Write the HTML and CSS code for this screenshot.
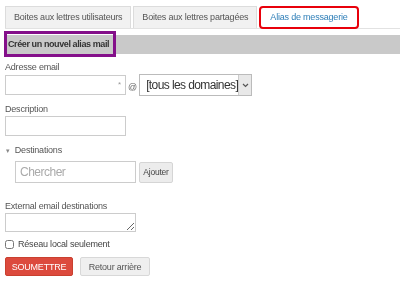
FILE: index.html
```html
<!DOCTYPE html>
<html lang="fr">
<head>
    <meta charset="UTF-8">
    <title>Alias de messagerie</title>
    <link rel="stylesheet" href="styles.css">
</head>
<body>
    <div class="page">
        <ul class="tabs">
            <li class="tab">Boites aux lettres utilisateurs</li>
            <li class="tab">Boites aux lettres partagées</li>
            <li class="tab active">Alias de messagerie</li>
        </ul>
        <div class="section-bar">
            <span class="section-title">Créer un nouvel alias mail</span>
        </div>

        <form class="form">
            <div class="field-email">
                <label>Adresse email</label>
                <div class="email-row">
                    <div class="email-box">
                        <input type="text" class="text-input">
                        <span class="required">*</span>
                    </div>
                    <span class="at">@</span>
                    <div class="domain-select">
                        <span class="domain-value">[tous les domaines]</span>
                        <span class="domain-arrow">
                            <svg width="7" height="5" viewBox="0 0 7 5"><path d="M1 1 L3.5 3.5 L6 1" fill="none" stroke="#555" stroke-width="1.2"/></svg>
                        </span>
                    </div>
                </div>
            </div>

            <div class="field-desc">
                <label>Description</label>
                <input type="text" class="text-input">
            </div>

            <div class="field-dest">
                <div class="toggle"><span class="caret">&#9662;</span>Destinations</div>
                <div class="search-row">
                    <input type="text" class="search-input" placeholder="Chercher">
                    <button type="button" class="btn-small">Ajouter</button>
                </div>
            </div>

            <div class="field-ext">
                <label>External email destinations</label>
                <textarea class="ext-area"></textarea>
            </div>

            <label class="check-row"><input type="checkbox" class="check"> Réseau local seulement</label>

            <div class="actions">
                <button type="button" class="btn-submit">SOUMETTRE</button>
                <button type="button" class="btn-back">Retour arrière</button>
            </div>
        </form>
    </div>
</body>
</html>
```

FILE: styles.css
```css
body {
    margin: 0;
    font-family: "Liberation Sans", Arial, sans-serif;
    color: #444;
    background: #fff;
}
.page {
    padding: 6px 0 0 5px;
}
.tabs {
    list-style: none;
    margin: 0;
    padding: 0;
    display: flex;
    gap: 2px;
    border-bottom: 1px solid #e2e2e2;
    height: 22px;
}
.tab {
    box-sizing: border-box;
    flex-shrink: 0;
    white-space: nowrap;
    height: 22px;
    padding: 0 8px;
    line-height: 21px;
    font-size: 9px;
    letter-spacing: -0.2px;
    color: #555;
    background: #f1f1f1;
    border: 1px solid #dcdcdc;
    border-bottom: none;
}
.tab.active {
    height: 23px;
    background: #fff;
    color: #2f7fb8;
    border: 2px solid #e8000b;
    border-radius: 4px;
    line-height: 19px;
    padding: 0 9px;
}
.section-bar {
    margin-top: 6px;
    height: 19px;
    background: #c9c9c9;
    display: flex;
    align-items: center;
}
.section-title {
    position: relative;
    font-size: 9px;
    letter-spacing: -0.4px;
    font-weight: bold;
    color: #333;
    padding: 0 4px 0 3px;
    line-height: 19px;
}
.section-title::after {
    content: "";
    position: absolute;
    left: -1px;
    right: -3px;
    top: -4px;
    bottom: -3px;
    border: 3px solid #84108a;
}
.form {
    margin-top: 8px;
}
label {
    display: block;
    font-size: 9px;
    letter-spacing: -0.2px;
    line-height: 10px;
    color: #555;
    margin-bottom: 2px;
}
.field-email {
    margin-bottom: 8px;
}
.field-desc {
    margin-bottom: 9px;
}
.field-dest {
    margin-bottom: 18px;
}
.field-ext {
    margin-bottom: 7px;
}
.text-input {
    box-sizing: border-box;
    width: 121px;
    height: 20px;
    border: 1px solid #ccc;
    margin: 0;
    padding: 2px 4px;
    display: block;
}
.email-row {
    display: flex;
    align-items: center;
}
.email-box {
    position: relative;
}
.required {
    position: absolute;
    right: 5px;
    top: 5px;
    font-size: 8px;
    color: #999;
}
.at {
    font-size: 9px;
    color: #666;
    margin: 3px 2px 0 2px;
}
.domain-select {
    box-sizing: border-box;
    display: flex;
    align-items: center;
    justify-content: space-between;
    width: 113px;
    height: 22px;
    border: 1px solid #bbb;
    background: #fff;
}
.domain-value {
    font-size: 12px;
    letter-spacing: -0.6px;
    color: #333;
    padding-left: 6px;
    white-space: nowrap;
}
.domain-arrow {
    box-sizing: border-box;
    width: 13px;
    height: 20px;
    background: #e8e8e8;
    border-left: 1px solid #ccc;
    display: flex;
    align-items: center;
    justify-content: center;
}
.toggle {
    font-size: 9px;
    letter-spacing: -0.2px;
    line-height: 10px;
    color: #555;
    margin-bottom: 5px;
}
.caret {
    font-size: 7px;
    color: #888;
    margin: 0 5px 0 1px;
}
.search-row {
    display: flex;
    align-items: center;
    padding-left: 10px;
    gap: 3px;
}
.search-input {
    box-sizing: border-box;
    width: 121px;
    height: 22px;
    border: 1px solid #ccc;
    margin: 0;
    padding: 2px 4px;
    font-family: "Liberation Sans", Arial, sans-serif;
    font-size: 12px;
    letter-spacing: -0.5px;
}
.search-input::placeholder {
    color: #aaa;
}
.btn-small {
    box-sizing: border-box;
    width: 34px;
    height: 21px;
    padding: 0;
    font-family: "Liberation Sans", Arial, sans-serif;
    font-size: 8.5px;
    letter-spacing: -0.2px;
    color: #444;
    background: #ececec;
    border: 1px solid #d5d5d5;
    border-radius: 2px;
}
.ext-area {
    box-sizing: border-box;
    display: block;
    width: 131px;
    height: 19px;
    border: 1px solid #ccc;
    margin: 0;
    resize: both;
}
.check-row {
    display: flex;
    align-items: center;
    color: #444;
    margin: 0 0 8px;
}
.check {
    width: 9px;
    height: 9px;
    margin: 0 4px 0 0;
}
.actions {
    display: flex;
    gap: 7px;
}
.btn-submit,
.btn-back {
    box-sizing: border-box;
    height: 19px;
    padding: 0;
    font-family: "Liberation Sans", Arial, sans-serif;
    font-size: 9px;
    letter-spacing: -0.2px;
    border-radius: 2px;
}
.btn-submit {
    width: 68px;
    color: #fff;
    background: #dc4a3d;
    border: 1px solid #c9402f;
}
.btn-back {
    width: 70px;
    color: #555;
    background: #efefef;
    border: 1px solid #d8d8d8;
}
```
